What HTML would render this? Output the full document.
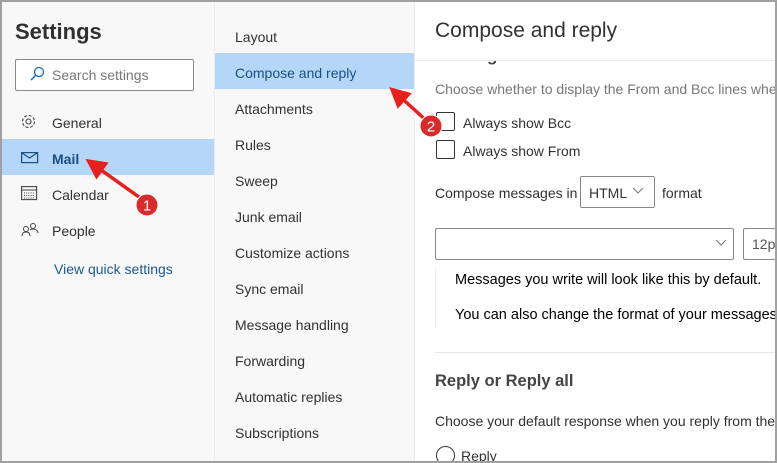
<!DOCTYPE html>
<html><head><style>
body{margin:0;width:777px;height:463px;overflow:hidden;font-family:"Liberation Sans",sans-serif;background:#a0a0a0;position:relative}
.wrap{position:absolute;left:2px;top:2px;width:773px;height:459px;background:#fff;overflow:hidden}
.left{position:absolute;left:0;top:0;width:212px;height:459px;background:#f8f8f8;border-right:1px solid #ececec}
.mid{position:absolute;left:213px;top:0;width:199px;height:459px;background:#f8f8f8;border-right:1px solid #ececec}
.right{position:absolute;left:413px;top:0;width:360px;height:459px;background:#fff;overflow:hidden}
.t{position:absolute;white-space:nowrap;color:#323130;font-size:14px}
.sel{position:absolute;background:#b3d6f9}
</style></head><body>
<div class="wrap">
<div class="left">
 <div class="t" style="left:13px;top:17px;font-size:22px;font-weight:bold;color:#323130">Settings</div>
 <div style="position:absolute;left:13px;top:57px;width:177px;height:30px;border:1px solid #8a8886;border-radius:2px;background:#fff"></div>
 <svg style="position:absolute;left:27px;top:64px" width="16" height="16" viewBox="0 0 16 16"><circle cx="10" cy="6" r="4.5" fill="none" stroke="#0f6cbd" stroke-width="1.3"/><path d="M7 9L2 14" stroke="#0f6cbd" stroke-width="1.4"/></svg>
 <div class="t" style="left:50px;top:65px;color:#777">Search settings</div>
 <svg style="position:absolute;left:18px;top:111px" width="17" height="17" viewBox="0 0 17 17"><circle cx="8.5" cy="8.5" r="2.5" fill="none" stroke="#444" stroke-width="1.1"/><circle cx="8.5" cy="8.5" r="6" fill="none" stroke="#444" stroke-width="1.1" stroke-dasharray="3 1.7"/></svg>
 <div class="t" style="left:50px;top:113px">General</div>
 <div class="sel" style="left:0;top:137px;width:212px;height:36px"></div>
 <svg style="position:absolute;left:19px;top:150px" width="18" height="12" viewBox="0 0 18 12"><rect x=".6" y=".6" width="16" height="10" fill="none" stroke="#1d4f80" stroke-width="1.2"/><path d="M1 1l7.5 5L16 1" fill="none" stroke="#1d4f80" stroke-width="1.2"/></svg>
 <div class="t" style="left:50px;top:149px;font-weight:bold;color:#1d4f80">Mail</div>
 <svg style="position:absolute;left:19px;top:183px" width="17" height="16" viewBox="0 0 17 16"><rect x=".6" y="1.6" width="15" height="13" fill="none" stroke="#444" stroke-width="1.1"/><path d="M1 5h15" stroke="#444"/><path d="M3 8h11M3 10.5h11M3 13h11" stroke="#444" stroke-dasharray="1 1.2"/></svg>
 <div class="t" style="left:50px;top:185px">Calendar</div>
 <svg style="position:absolute;left:19px;top:220px" width="18" height="15" viewBox="0 0 18 15"><circle cx="5" cy="7" r="2.5" fill="none" stroke="#444"/><circle cx="12" cy="4" r="2.5" fill="none" stroke="#444"/><path d="M1 14c0-3 2-4 4-4s4 1 4 4M9 8c1-1 2-1 3-1 3 0 5 2 5 4" fill="none" stroke="#444"/></svg>
 <div class="t" style="left:50px;top:221px">People</div>
 <div class="t" style="left:52px;top:259px;color:#1a5a96">View quick settings</div>
</div>
<div class="mid">
 <div class="t" style="left:20px;top:27px">Layout</div>
 <div class="sel" style="left:0;top:51px;width:199px;height:36px"></div>
 <div class="t" style="left:20px;top:63px;color:#1d4f80">Compose and reply</div>
 <div class="t" style="left:20px;top:99px">Attachments</div>
 <div class="t" style="left:20px;top:135px">Rules</div>
 <div class="t" style="left:20px;top:171px">Sweep</div>
 <div class="t" style="left:20px;top:207px">Junk email</div>
 <div class="t" style="left:20px;top:243px">Customize actions</div>
 <div class="t" style="left:20px;top:279px">Sync email</div>
 <div class="t" style="left:20px;top:315px">Message handling</div>
 <div class="t" style="left:20px;top:351px">Forwarding</div>
 <div class="t" style="left:20px;top:387px">Automatic replies</div>
 <div class="t" style="left:20px;top:423px">Subscriptions</div>
</div>
<div class="right">
 <div class="t" style="left:20px;top:44px;font-size:17px;font-weight:bold;color:#444">Message format</div>
 <div style="position:absolute;left:0;top:0;width:360px;height:58px;background:#fff;border-bottom:1px solid #e8e8e8"></div>
 <div class="t" style="left:20px;top:17px;font-size:21px;color:#323130">Compose and reply</div>
 <div class="t" style="left:20px;top:79px;color:#777">Choose whether to display the From and Bcc lines when</div>
 <div style="position:absolute;left:21px;top:110px;width:17px;height:17px;border:1px solid #333;border-radius:2px"></div>
 <div class="t" style="left:48px;top:113px">Always show Bcc</div>
 <div style="position:absolute;left:21px;top:138px;width:17px;height:17px;border:1px solid #333;border-radius:2px"></div>
 <div class="t" style="left:48px;top:141px">Always show From</div>
 <div class="t" style="left:20px;top:183px">Compose messages in</div>
 <div style="position:absolute;left:165px;top:174px;width:73px;height:30px;border:1px solid #8a8886;border-radius:2px"></div>
 <div class="t" style="left:174px;top:183px">HTML</div>
 <svg style="position:absolute;left:217px;top:185px" width="12" height="8"><path d="M1 1l5 5 5-5" fill="none" stroke="#777"/></svg>
 <div class="t" style="left:247px;top:183px">format</div>
 <div style="position:absolute;left:20px;top:226px;width:297px;height:30px;border:1px solid #8a8886;border-radius:2px"></div>
 <svg style="position:absolute;left:300px;top:237px" width="12" height="8"><path d="M1 1l5 5 5-5" fill="none" stroke="#777"/></svg>
 <div style="position:absolute;left:328px;top:226px;width:60px;height:30px;border:1px solid #8a8886;border-radius:2px"></div>
 <div class="t" style="left:337px;top:234px;color:#555">12pt</div>
 <div style="position:absolute;left:20px;top:266px;width:1px;height:58px;background:#eee"></div>
 <div class="t" style="left:40px;top:270px;color:#000;font-size:14.5px">Messages you write will look like this by default.</div>
 <div class="t" style="left:40px;top:305px;color:#000;font-size:14.5px">You can also change the format of your messages</div>
 <div style="position:absolute;left:20px;top:350px;width:360px;height:1px;background:#e8e8e8"></div>
 <div class="t" style="left:20px;top:370px;font-size:16.5px;font-weight:bold;color:#444">Reply or Reply all</div>
 <div class="t" style="left:20px;top:411px">Choose your default response when you reply from the</div>
 <div style="position:absolute;left:21px;top:444px;width:17px;height:17px;border:1px solid #333;border-radius:50%"></div>
 <div class="t" style="left:46px;top:446px">Reply</div>
</div>
<svg style="position:absolute;left:0;top:0" width="773" height="459">
 <defs><marker id="a" markerWidth="6" markerHeight="6" refX="3" refY="3" orient="auto"><path d="M0 0L6 3L0 6z" fill="#e8201c"/></marker></defs>
 <line x1="144" y1="200" x2="92" y2="163" stroke="#e8201c" stroke-width="3.5" marker-end="url(#a)"/>
 <circle cx="145" cy="203" r="11" fill="#d92b2b" stroke="#fff" stroke-width="1"/>
 <text x="145" y="208.5" text-anchor="middle" font-family="Liberation Sans" font-size="15" fill="#fff">1</text>
 <line x1="426" y1="120" x2="395" y2="92" stroke="#e8201c" stroke-width="3.5" marker-end="url(#a)"/>
 <circle cx="429" cy="124" r="11" fill="#d92b2b" stroke="#fff" stroke-width="1"/>
 <text x="429" y="129.5" text-anchor="middle" font-family="Liberation Sans" font-size="15" fill="#fff">2</text>
</svg>
</div>
</body></html>
